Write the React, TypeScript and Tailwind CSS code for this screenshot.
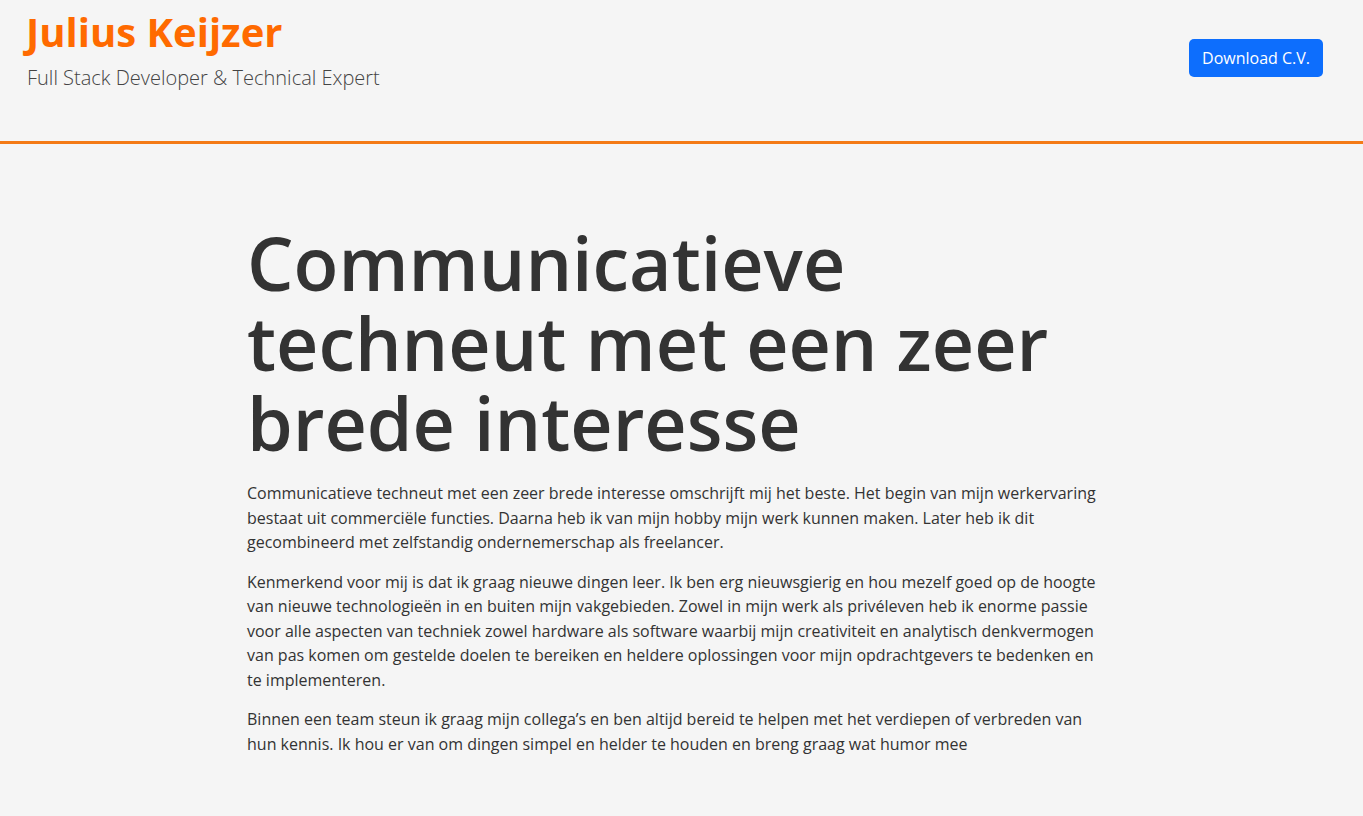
import React from 'react'

const paragraphs = [
  'Communicatieve techneut met een zeer brede interesse omschrijft mij het beste. Het begin van mijn werkervaring bestaat uit commerciële functies. Daarna heb ik van mijn hobby mijn werk kunnen maken. Later heb ik dit gecombineerd met zelfstandig ondernemerschap als freelancer.',
  'Kenmerkend voor mij is dat ik graag nieuwe dingen leer. Ik ben erg nieuwsgierig en hou mezelf goed op de hoogte van nieuwe technologieën in en buiten mijn vakgebieden. Zowel in mijn werk als privéleven heb ik enorme passie voor alle aspecten van techniek zowel hardware als software waarbij mijn creativiteit en analytisch denkvermogen van pas komen om gestelde doelen te bereiken en heldere oplossingen voor mijn opdrachtgevers te bedenken en te implementeren.',
  'Binnen een team steun ik graag mijn collega’s en ben altijd bereid te helpen met het verdiepen of verbreden van hun kennis. Ik hou er van om dingen simpel en helder te houden en breng graag wat humor mee',
]

const App: React.FC = () => {
  return (
    <div className="min-h-screen bg-[#f5f5f5] text-[#333] font-['Open_Sans',sans-serif]">
      <header className="h-[144px] border-b-[3px] border-[#f47a16] flex justify-between items-start pl-[26px] pr-[40px]">
        <div className="pt-[6px]">
          <h1 className="text-[40px] leading-[52px] font-bold text-[#ff6a00]">Julius Keijzer</h1>
          <p className="text-[20px] leading-[30px] font-light text-[#444] pl-[1px] mt-[5px]">Full Stack Developer &amp; Technical Expert</p>
        </div>
        <button className="mt-[39px] h-[38px] px-[13px] rounded-[5px] bg-[#0d6efd] text-white text-[16px] leading-[24px]">
          Download C.V.
        </button>
      </header>
      <main className="pl-[247px] pr-[260px] pt-[79px]">
        <h2 className="text-[73.5px] leading-[80px] font-semibold text-[#333] mb-[18px] max-w-[870px]">
          Communicatieve techneut met een zeer brede interesse
        </h2>
        {paragraphs.map((p, i) => (
          <p key={i} className="text-[16px] leading-[24.5px] mb-[15px] max-w-[856px]">{p}</p>
        ))}
      </main>
    </div>
  )
}

export default App
